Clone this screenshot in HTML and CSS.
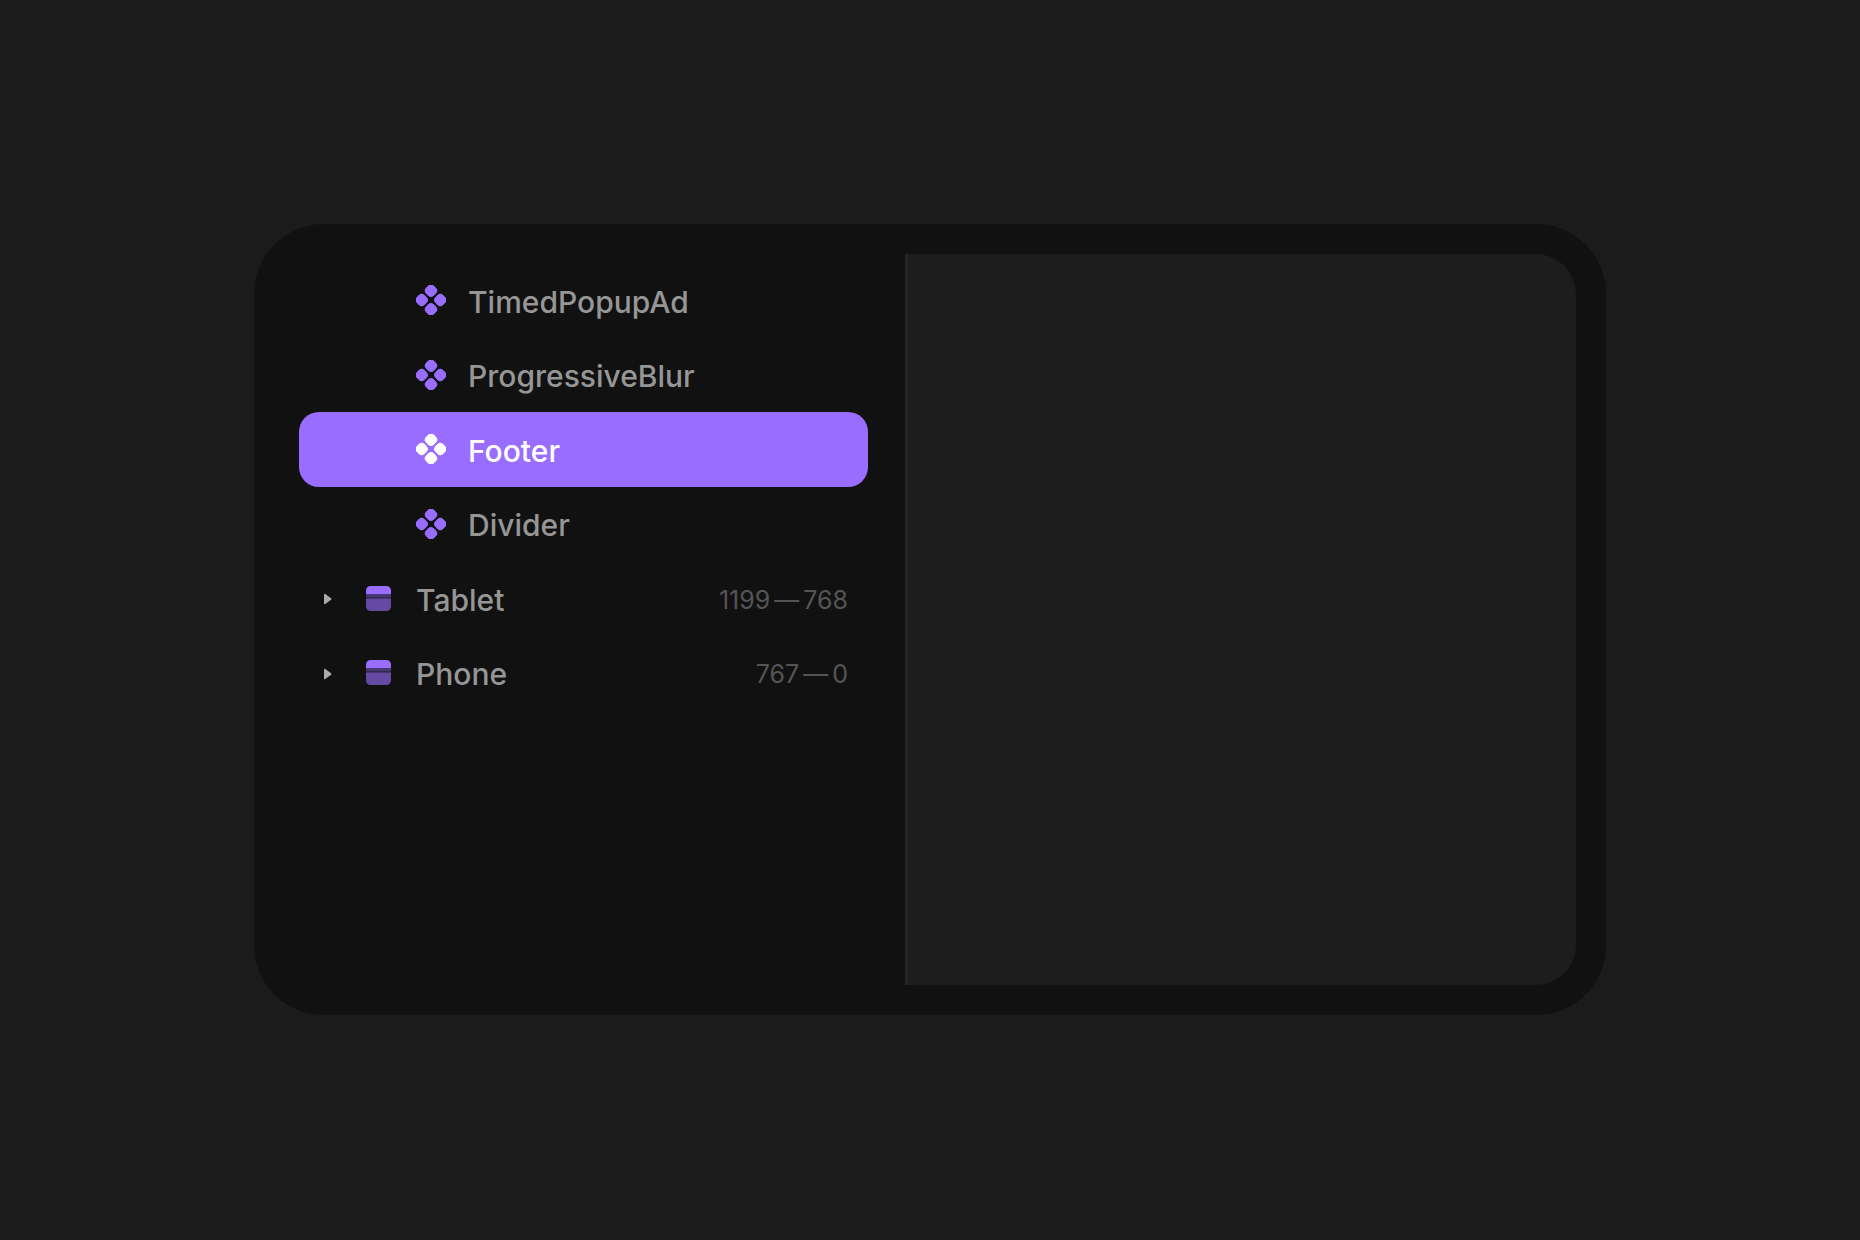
FILE: index.html
```html
<!DOCTYPE html>
<html lang="en">
<head>
<meta charset="utf-8">
<title>Layers</title>
<link rel="stylesheet" href="styles.css">
</head>
<body>
<svg class="sprite" aria-hidden="true">
  <symbol id="component" viewBox="0 0 30 30">
    <rect x="9.500" y="0.200" width="11" height="11" rx="4" transform="rotate(45 15 5.7)"/>
    <rect x="0.200" y="9.500" width="11" height="11" rx="4" transform="rotate(45 5.7 15)"/>
    <rect x="18.800" y="9.500" width="11" height="11" rx="4" transform="rotate(45 24.3 15)"/>
    <rect x="9.500" y="18.800" width="11" height="11" rx="4" transform="rotate(45 15 24.3)"/>
  </symbol>
  <symbol id="breakpoint" viewBox="0 0 25 25">
    <path d="M0 8V4.500A4.500 4.500 0 0 1 4.500 0h16A4.500 4.500 0 0 1 25 4.500V8z"/>
    <path d="M0 8h25v3H0z" opacity=".42"/>
    <path d="M0 11h25v1.500H0z" opacity=".25"/>
    <path d="M0 12.500h25v8a4.500 4.500 0 0 1-4.500 4.500h-16A4.500 4.500 0 0 1 0 20.500z" opacity=".62"/>
  </symbol>
  <symbol id="arrow" viewBox="0 0 8 12">
    <path d="M0 1.500C0 .8.700.400 1.300.900L7.100 5.300a.9.9 0 0 1 0 1.400L1.300 11.100C.7 11.600 0 11.200 0 10.500z"/>
  </symbol>
</svg>
<main class="window">
  <nav class="sidebar" aria-label="Layers">
    <ul class="layers">
      <li><button class="row child"><svg class="component"><use href="#component"/></svg><span class="name">TimedPopupAd</span></button></li>
      <li><button class="row child"><svg class="component"><use href="#component"/></svg><span class="name">ProgressiveBlur</span></button></li>
      <li><button class="row child selected" aria-current="true"><svg class="component"><use href="#component"/></svg><span class="name">Footer</span></button></li>
      <li><button class="row child"><svg class="component"><use href="#component"/></svg><span class="name">Divider</span></button></li>
      <li><button class="row" aria-expanded="false"><svg class="arrow"><use href="#arrow"/></svg><svg class="breakpoint"><use href="#breakpoint"/></svg><span class="name">Tablet</span><span class="range"><span>1199</span><span>—</span><span>768</span></span></button></li>
      <li><button class="row" aria-expanded="false"><svg class="arrow"><use href="#arrow"/></svg><svg class="breakpoint"><use href="#breakpoint"/></svg><span class="name">Phone</span><span class="range"><span>767</span><span>—</span><span>0</span></span></button></li>
    </ul>
  </nav>
  <section class="canvas" aria-label="Canvas"></section>
</main>
</body>
</html>
```
FILE: styles.css
```css
* { box-sizing: border-box; }

body {
  margin: 0;
  min-height: 100vh;
  padding: 224px 254px 225px;
  display: flex;
  background: #1b1b1b;
  font-family: Inter, sans-serif;
}

.sprite { position: absolute; width: 0; height: 0; }

.window {
  flex: 1;
  display: flex;
  padding: 30px;
  border-radius: 70px;
  background: #111;
}

.sidebar {
  width: 621px;
  padding: 9px 37px 0 15px;
}

.layers {
  height: 447px;
  margin: 0;
  padding: 0;
  display: grid;
  grid-template-rows: repeat(6, 1fr);
  list-style: none;
}

.row {
  width: 100%;
  height: 100%;
  display: flex;
  align-items: center;
  padding: 0 20px 0 25px;
  border: 0;
  border-radius: 20px;
  background: none;
  color: #969696;
  font: 500 30px/36px Inter, sans-serif;
  text-align: left;
}

.row.child { padding-left: 117px; }

.row.selected {
  background: #996dff;
  color: #fff;
}

.component {
  width: 30px;
  height: 30px;
  margin-right: 22px;
  fill: #996dff;
}

.selected .component { fill: #fff; }

.arrow {
  width: 8px;
  height: 14px;
  padding-top: 2px;
  margin-right: 34px;
  fill: #aaa;
}

.breakpoint {
  width: 25px;
  height: 25px;
  margin-right: 25px;
  fill: #996dff;
}

.name { padding-top: 3px; }

.range {
  display: flex;
  gap: 4px;
  margin-left: auto;
  padding-top: 3px;
  color: #555;
  font-size: 25px;
  font-weight: 400;
}

.canvas {
  flex: 1;
  border-left: 3px solid #242424;
  border-radius: 0 40px 40px 0;
  background: #1d1d1d;
}
```
